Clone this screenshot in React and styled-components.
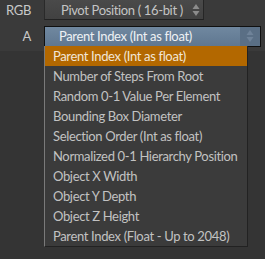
import React from "react";
import styled, { createGlobalStyle } from "styled-components";

const Global = createGlobalStyle`
  html, body { margin: 0; padding: 0; background: #383838; }
  body { font-family: Lato, "DejaVu Sans", sans-serif; letter-spacing: -0.35px; }
`;

const Page = styled.div`
  width: 265px;
  height: 259px;
  overflow: hidden;
  position: relative;
  background: linear-gradient(#3a3a3a 0, #3a3a3a 51px, #343434 51px);
`;

const Row = styled.div`
  display: flex;
  align-items: center;
  height: 20px;
  margin-bottom: ${(p) => p.$gap || 0}px;
  position: relative;
`;

const Label = styled.div`
  width: 31px;
  text-align: right;
  font-size: 13px;
  color: #c8c8c8;
  margin-right: 13px;
`;

const Button = styled.div`
  width: 160px;
  height: 20px;
  box-sizing: border-box;
  display: flex;
  align-items: center;
  background: linear-gradient(#4a4a4a, #414141);
  border-bottom: 1px solid #222;
  border-right: 1px solid #262626;
  border-left: 1px solid #2a2a2a;
  color: #c4c4c4;
  font-size: 13px;
`;

const Select = styled.div`
  width: 217px;
  height: 21px;
  box-sizing: border-box;
  display: flex;
  align-items: center;
  border: 1px solid #101010;
  background: linear-gradient(#7088a0, #5f7790);
  color: #eef1f4;
  font-size: 13px;
`;

const Text = styled.span`
  flex: 1;
  padding-left: ${(p) => p.$pad}px;
  white-space: nowrap;
`;

const Spin = styled.div`
  width: ${(p) => p.$w}px;
  align-self: stretch;
  display: flex;
  align-items: center;
  justify-content: center;
  background: ${(p) => p.$bg || "transparent"};
`;

const Menu = styled.div`
  position: absolute;
  left: 44px;
  top: 46px;
  width: 204px;
  box-sizing: border-box;
  background: #3b3b3b;
  border-left: 1px solid #7a7a7a;
  border-right: 1px solid #222;
  border-bottom: 1px solid #222;
`;

const Item = styled.div`
  height: 20px;
  line-height: 20px;
  padding-left: 8px;
  font-size: 13px;
  white-space: nowrap;
  color: ${(p) => (p.$active ? "#f2e6d6" : "#c2c2c2")};
  background: ${(p) => (p.$active ? "#b36800" : "transparent")};
`;

const Arrows = ({ color }) => (
  <svg width="8" height="14" viewBox="0 0 8 14">
    <path d="M4 1 L7.5 6 L0.5 6 Z" fill={color} />
    <path d="M4 13 L7.5 8 L0.5 8 Z" fill={color} />
  </svg>
);

const items = [
  "Parent Index (Int as float)",
  "Number of Steps From Root",
  "Random 0-1 Value Per Element",
  "Bounding Box Diameter",
  "Selection Order (Int as float)",
  "Normalized 0-1 Hierarchy Position",
  "Object X Width",
  "Object Y Depth",
  "Object Z Height",
  "Parent Index (Float - Up to 2048)",
];

export default function App() {
  return (
    <Page>
      <Global />
      <Row $gap={6}>
        <Label>RGB</Label>
        <Button>
          <Text $pad={16}>Pivot Position ( 16-bit )</Text>
          <Spin $w={14}>
            <Arrows color="#8c8c8c" />
          </Spin>
        </Button>
      </Row>
      <Row>
        <Label>A</Label>
        <Select>
          <Text $pad={14}>Parent Index (Int as float)</Text>
          <Spin $w={20} $bg="#5a6f85">
            <Arrows color="#6f8399" />
          </Spin>
        </Select>
      </Row>
      <Menu>
        {items.map((t, i) => (
          <Item key={t} $active={i === 0}>
            {t}
          </Item>
        ))}
      </Menu>
    </Page>
  );
}
